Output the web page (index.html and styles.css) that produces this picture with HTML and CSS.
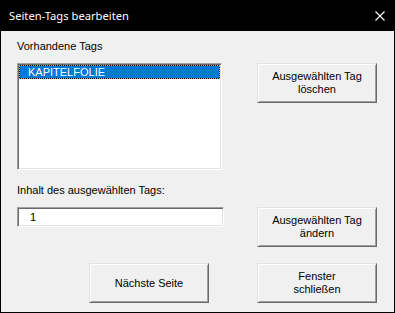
FILE: index.html
```html
<!DOCTYPE html>
<html lang="de">
<head>
  <meta charset="UTF-8">
  <title>Seiten-Tags bearbeiten</title>
  <link rel="stylesheet" href="styles.css">
</head>
<body>
  <div class="window">
    <div class="titlebar">
      <span class="title">Seiten-Tags bearbeiten</span>
      <svg class="close" width="10" height="10" viewBox="0 0 10 10">
        <path d="M0.5 0.5 L9.5 9.5 M9.5 0.5 L0.5 9.5" stroke="#fff" stroke-width="1.1" fill="none"/>
      </svg>
    </div>
    <div class="content">
      <div class="label label-top">Vorhandene Tags</div>
      <div class="listbox">
        <div class="item selected">KAPITELFOLIE</div>
      </div>
      <button class="btn btn-delete">Ausgewählten Tag<br>löschen</button>
      <div class="label label-value">Inhalt des ausgewählten Tags:</div>
      <div class="textbox">1</div>
      <button class="btn btn-change">Ausgewählten Tag<br>ändern</button>
      <button class="btn btn-next">Nächste Seite</button>
      <button class="btn btn-close">Fenster<br>schließen</button>
    </div>
  </div>
</body>
</html>
```

FILE: styles.css
```css
body {
  margin: 0;
  font-family: 'Liberation Sans', Arial, sans-serif;
  font-size: 11px;
  background: #f0f0f0;
}

.window {
  width: 395px;
  height: 313px;
  box-sizing: border-box;
  border: 1px solid #000;
  border-top: none;
  background: #f0f0f0;
  display: flex;
  flex-direction: column;
}

.titlebar {
  height: 31px;
  margin: 0 -1px;
  background: #000;
  color: #fff;
  display: flex;
  align-items: center;
  justify-content: space-between;
  padding: 0 10px 0 9px;
  font-family: 'Noto Sans', sans-serif;
  font-size: 11.2px;
  flex-shrink: 0;
}

.title {
  margin-top: -1px;
}

.close {
  display: block;
}

.content {
  display: grid;
  grid-template-columns: 207px 120px;
  grid-template-rows: 32px 107px 37px 20px 36px 40px;
  column-gap: 33px;
  padding-left: 16px;
}

.label {
  color: #000;
  line-height: 13px;
  align-self: end;
}

.label-top {
  grid-column: 1;
  grid-row: 1;
  margin-bottom: 10px;
}

.label-value {
  grid-column: 1;
  grid-row: 3;
  margin-bottom: 10px;
}

.listbox {
  grid-column: 1;
  grid-row: 2;
  width: 205px;
  box-sizing: border-box;
  background: #fff;
  border: 1px solid;
  border-color: #a0a0a0 #fff #fff #a0a0a0;
  box-shadow: inset 1px 1px #696969, inset -1px -1px #e3e3e3;
  padding: 1px;
}

.item {
  height: 14px;
  line-height: 12px;
  padding-left: 8px;
  box-sizing: border-box;
}

.selected {
  color: #fff;
  border: 1px dotted #f7a030;
  background: linear-gradient(#0078d7, #0078d7) padding-box, #000 border-box;
}

.textbox {
  grid-column: 1;
  grid-row: 4;
  height: 20px;
  box-sizing: border-box;
  background: #fff;
  border: 1px solid;
  border-color: #a0a0a0 #fff #fff #a0a0a0;
  box-shadow: inset 1px 1px #696969, inset -1px -1px #e3e3e3;
  padding-left: 12px;
  line-height: 18px;
  color: #000;
}

.btn {
  width: 120px;
  height: 40px;
  box-sizing: border-box;
  background: #f0f0f0;
  border: 1px solid;
  border-color: #e3e3e3 #696969 #696969 #e3e3e3;
  box-shadow: inset 1px 1px #fff, inset -1px -1px #a0a0a0;
  font-family: inherit;
  font-size: 11px;
  line-height: 13px;
  color: #000;
  padding: 0;
  align-self: start;
}

.btn-delete {
  grid-column: 2;
  grid-row: 2;
}

.btn-change {
  grid-column: 2;
  grid-row: 4 / 6;
}

.btn-next {
  grid-column: 1;
  grid-row: 6;
  margin-left: 72px;
}

.btn-close {
  grid-column: 2;
  grid-row: 6;
}
```
